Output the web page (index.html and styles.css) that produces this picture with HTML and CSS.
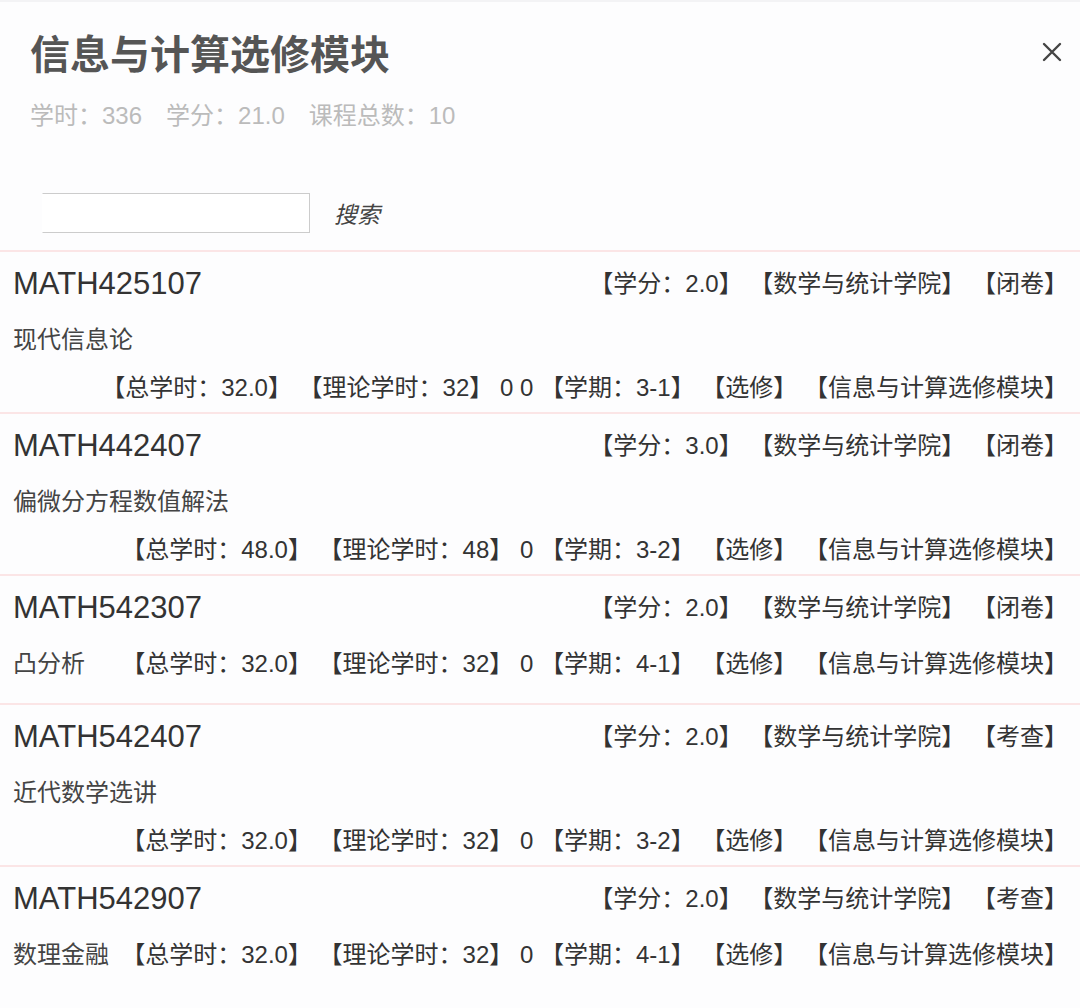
FILE: index.html
```html
<!DOCTYPE html>
<html lang="zh-CN">
<head>
    <meta charset="UTF-8">
    <meta name="viewport" content="width=device-width, initial-scale=1.0">
    <title>信息与计算选修模块</title>
    <link rel="stylesheet" href="styles.css">
</head>
<body>
    <div class="modal">
        <div class="modal-head">
            <h1>信息与计算选修模块</h1>
            <span class="close">
                <svg width="20" height="20" viewBox="0 0 20 20"><path d="M2 2L18 18M18 2L2 18" stroke="#444" stroke-width="2.4" stroke-linecap="round"/></svg>
            </span>
        </div>
        <div class="summary">
            <span>学时：336</span>
            <span>学分：21.0</span>
            <span>课程总数：10</span>
        </div>

        <div class="search">
            <input type="text">
            <span class="search-btn">搜索</span>
        </div>

        <ul class="course-list">
            <li class="course">
                <div class="course-top">
                    <span class="code">MATH425107</span>
                    <span class="tags">【学分：2.0】 【数学与统计学院】 【闭卷】</span>
                </div>
                <div class="course-bottom">
                    <span class="name full">现代信息论</span>
                    <span class="tags">【总学时：32.0】 【理论学时：32】 0 0 【学期：3-1】 【选修】 【信息与计算选修模块】</span>
                </div>
            </li>
            <li class="course">
                <div class="course-top">
                    <span class="code">MATH442407</span>
                    <span class="tags">【学分：3.0】 【数学与统计学院】 【闭卷】</span>
                </div>
                <div class="course-bottom">
                    <span class="name full">偏微分方程数值解法</span>
                    <span class="tags">【总学时：48.0】 【理论学时：48】 0 【学期：3-2】 【选修】 【信息与计算选修模块】</span>
                </div>
            </li>
            <li class="course">
                <div class="course-top">
                    <span class="code">MATH542307</span>
                    <span class="tags">【学分：2.0】 【数学与统计学院】 【闭卷】</span>
                </div>
                <div class="course-bottom">
                    <span class="name">凸分析</span>
                    <span class="tags">【总学时：32.0】 【理论学时：32】 0 【学期：4-1】 【选修】 【信息与计算选修模块】</span>
                </div>
            </li>
            <li class="course">
                <div class="course-top">
                    <span class="code">MATH542407</span>
                    <span class="tags">【学分：2.0】 【数学与统计学院】 【考查】</span>
                </div>
                <div class="course-bottom">
                    <span class="name full">近代数学选讲</span>
                    <span class="tags">【总学时：32.0】 【理论学时：32】 0 【学期：3-2】 【选修】 【信息与计算选修模块】</span>
                </div>
            </li>
            <li class="course">
                <div class="course-top">
                    <span class="code">MATH542907</span>
                    <span class="tags">【学分：2.0】 【数学与统计学院】 【考查】</span>
                </div>
                <div class="course-bottom">
                    <span class="name">数理金融</span>
                    <span class="tags">【总学时：32.0】 【理论学时：32】 0 【学期：4-1】 【选修】 【信息与计算选修模块】</span>
                </div>
            </li>
        </ul>
    </div>
</body>
</html>
```

FILE: styles.css
```css
body {
    margin: 0;
    font-family: "Liberation Sans", "Noto Sans CJK SC", sans-serif;
    background-color: #fdfdfe;
    color: #333;
}
.modal {
    border-top: 2px solid #f3f3f5;
    background-color: #fdfdfe;
}
.modal-head {
    display: flex;
    justify-content: space-between;
    align-items: center;
    padding: 22px 16px 0 30px;
}
.modal-head h1 {
    margin: 0;
    font-size: 40px;
    line-height: 56px;
    font-weight: bold;
    color: #555;
    font-family: "Noto Sans CJK SC", sans-serif;
}
.close {
    display: flex;
    width: 24px;
    height: 24px;
    align-items: center;
    justify-content: center;
    cursor: pointer;
}
.summary {
    display: flex;
    gap: 24px;
    padding-left: 30px;
    margin-top: 20px;
    font-size: 24px;
    line-height: 32px;
    color: #bbb;
}
.search {
    display: flex;
    align-items: center;
    gap: 24px;
    margin: 61px 0 17px 42px;
}
.search input {
    width: 268px;
    height: 40px;
    box-sizing: border-box;
    border: 1px solid #ccc;
    border-left-color: transparent;
    background: #fff;
    outline: none;
}
.search-btn {
    font-size: 23px;
    font-style: italic;
    color: #444;
    cursor: pointer;
}
.course-list {
    list-style: none;
    margin: 0;
    padding: 0;
}
.course {
    border-top: 2px solid #fbe5e6;
    padding: 12px 12px 9px 13px;
}
.course-top {
    display: flex;
    justify-content: space-between;
    align-items: center;
    height: 40px;
}
.code {
    font-size: 31px;
    color: #333;
}
.tags {
    font-size: 24px;
    line-height: 30px;
    color: #333;
    white-space: nowrap;
}
.course-bottom {
    display: flex;
    flex-wrap: wrap;
    align-items: flex-start;
    row-gap: 3px;
    margin-top: 21px;
}
.course-bottom .tags {
    margin-left: auto;
}
.name {
    font-size: 24px;
    line-height: 30px;
    color: #444;
    margin-bottom: 15px;
    white-space: nowrap;
}
.name.full {
    width: 100%;
}
```
